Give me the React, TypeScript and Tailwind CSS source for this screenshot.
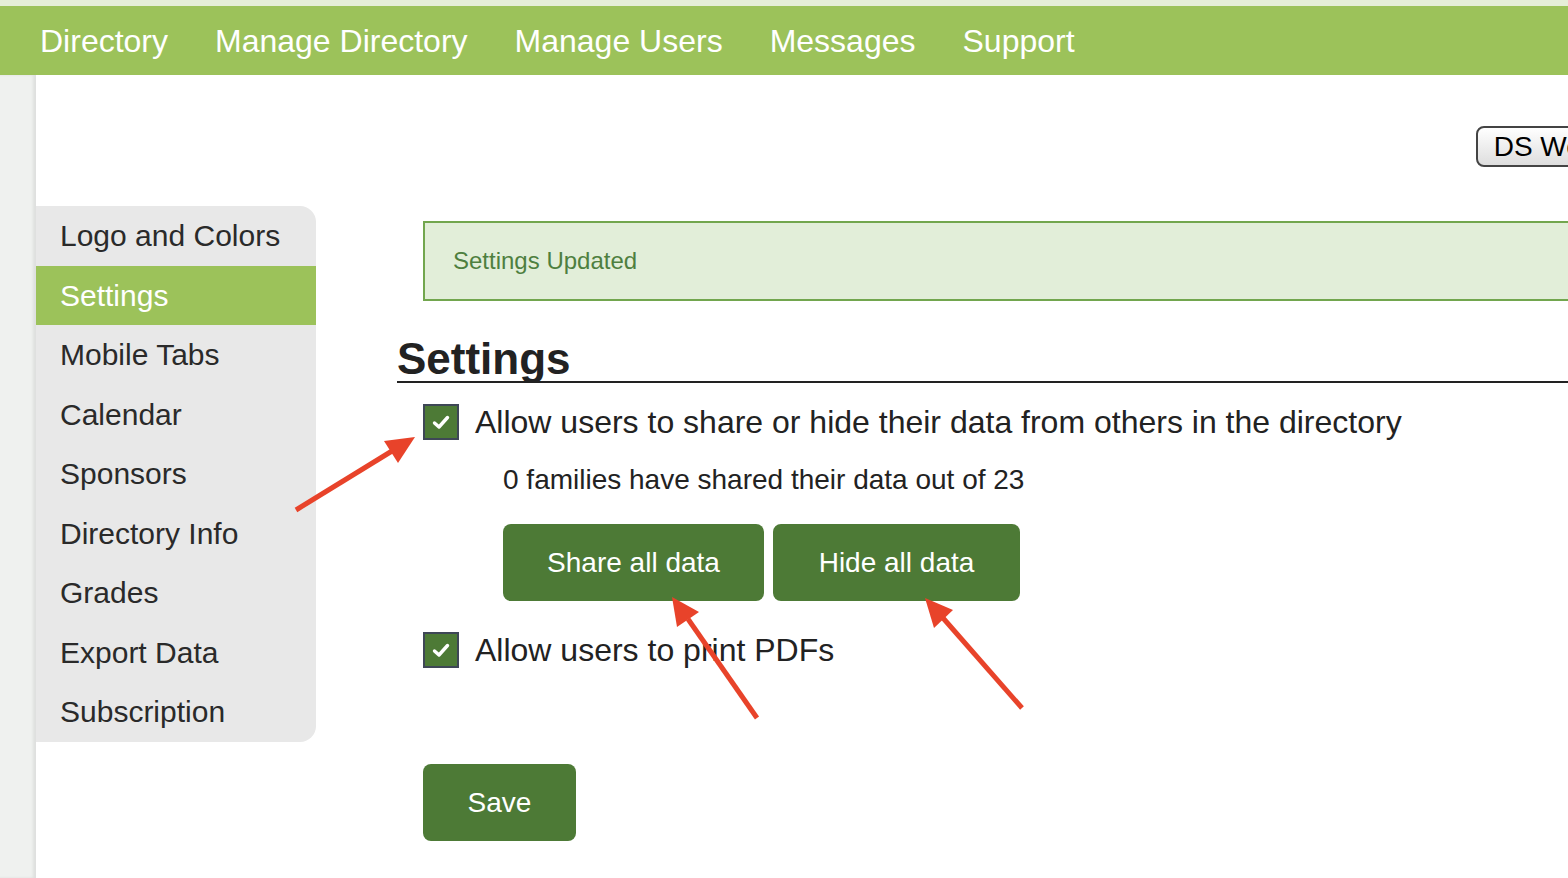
import React from "react";

const navItems = ["Directory", "Manage Directory", "Manage Users", "Messages", "Support"];

const sideItems = [
  "Logo and Colors",
  "Settings",
  "Mobile Tabs",
  "Calendar",
  "Sponsors",
  "Directory Info",
  "Grades",
  "Export Data",
  "Subscription",
];

function CheckBox() {
  return (
    <span className="flex h-9 w-9 shrink-0 items-center justify-center border-2 border-[#3e4756] bg-[#4d7a36]">
      <svg width="18" height="15" viewBox="0 0 18 15" fill="none">
        <path d="M2.5 8 L7 12 L15.5 2.5" stroke="white" strokeWidth="3.4" strokeLinecap="round" strokeLinejoin="round" />
      </svg>
    </span>
  );
}

function Arrows() {
  // annotation arrows drawn over the screenshot
  const red = "#e8432a";
  return (
    <svg className="pointer-events-none absolute inset-0" width="1568" height="878">
      <line x1="296" y1="510" x2="392" y2="451" stroke={red} strokeWidth="5" />
      <polygon points="415,437 398,463 384,441" fill={red} />
      <line x1="757" y1="718" x2="688" y2="619" stroke={red} strokeWidth="5" />
      <polygon points="672,597 699,612 677,627" fill={red} />
      <line x1="1022" y1="708" x2="943" y2="618" stroke={red} strokeWidth="5" />
      <polygon points="925,598 953,610 934,628" fill={red} />
    </svg>
  );
}

export default function App() {
  return (
    <div
      className="relative flex h-[878px] w-[1568px] flex-col overflow-hidden bg-white text-[#222]"
      style={{ fontFamily: '"Liberation Sans", Arial, sans-serif' }}
    >
      <div className="h-[6px] shrink-0 bg-[#e5eed8]" />
      <nav className="flex h-[69px] shrink-0 items-center gap-[47px] bg-[#9cc25a] pl-10 text-[32px] leading-none text-white">
        {navItems.map((n) => (
          <span key={n}>{n}</span>
        ))}
      </nav>

      <div className="flex flex-1">
        <div className="w-9 shrink-0 bg-[#eff1ef] shadow-[inset_-3px_0_3px_rgba(0,0,0,0.07)]" />

        <main className="flex min-w-0 flex-1 flex-col">
          <div className="flex justify-end pt-[51px]">
            <button className="-mr-[91px] flex h-[41px] items-center rounded-lg border-2 border-[#444] bg-gradient-to-b from-white to-[#dedede] px-4 text-[28px] leading-none text-black">
              DS Website
            </button>
          </div>

          <div className="mt-[39px] flex">
            <aside className="w-[280px] shrink-0 self-start overflow-hidden rounded-r-2xl bg-[#e8e8e8]">
              {sideItems.map((s) => (
                <div
                  key={s}
                  className={
                    s === "Settings"
                      ? "flex h-[59.5px] items-center bg-[#9cc25a] pl-6 text-[30px] text-white"
                      : "flex h-[59.5px] items-center pl-6 text-[30px] text-[#2a2a2a]"
                  }
                >
                  {s}
                </div>
              ))}
            </aside>

            <section className="ml-[81px] min-w-0 flex-1 pt-[15px]">
              <div className="-mr-8 ml-[26px] flex h-[80px] items-center border-2 border-[#72a64e] bg-[#e2eed9] pl-7 text-[24px] text-[#4e7f3f]">
                Settings Updated
              </div>

              <h1 className="mt-[36px] border-b-2 border-[#222] text-[44px] font-bold leading-none text-[#222]">
                Settings
              </h1>

              <div className="ml-[26px]">
                <div className="mt-[21px] flex h-9 items-center gap-4">
                  <CheckBox />
                  <span className="text-[32px] leading-none">
                    Allow users to share or hide their data from others in the directory
                  </span>
                </div>

                <p className="mt-[26px] pl-20 text-[28px] leading-[28px]">
                  0 families have shared their data out of 23
                </p>

                <div className="mt-[30px] flex gap-[9px] pl-20">
                  <button className="h-[77px] w-[261px] rounded-lg bg-[#4d7a36] text-[28px] text-white">
                    Share all data
                  </button>
                  <button className="h-[77px] w-[247px] rounded-lg bg-[#4d7a36] text-[28px] text-white">
                    Hide all data
                  </button>
                </div>

                <div className="mt-[31px] flex h-9 items-center gap-4">
                  <CheckBox />
                  <span className="text-[32px] leading-none">Allow users to print PDFs</span>
                </div>

                <button className="mt-[96px] h-[77px] w-[153px] rounded-lg bg-[#4d7a36] text-[28px] text-white">
                  Save
                </button>
              </div>
            </section>
          </div>
        </main>
      </div>

      <Arrows />
    </div>
  );
}
